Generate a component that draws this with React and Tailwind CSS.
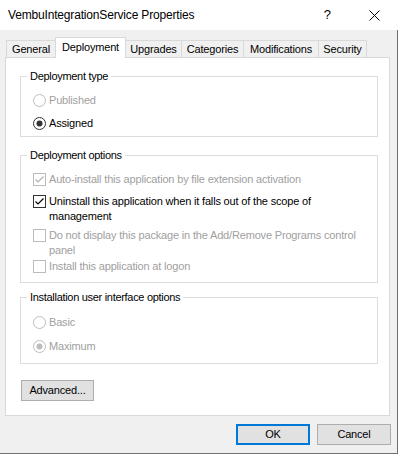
import React from "react";

function Check({ checked, disabled }) {
  const c = disabled ? "#bcbcbc" : "#333333";
  return (
    <svg width="13" height="13" viewBox="0 0 13 13" className="shrink-0 block">
      <rect x="0.5" y="0.5" width="12" height="12" fill="white" stroke={c} />
      {checked && (
        <polyline
          points="2.5,6.5 5,9 10.5,3.5"
          fill="none"
          stroke={disabled ? "#b0b0b0" : "#000000"}
          strokeWidth="1.2"
        />
      )}
    </svg>
  );
}

function Radio({ checked, disabled }) {
  const c = disabled ? "#bcbcbc" : "#333333";
  return (
    <svg width="13" height="13" viewBox="0 0 13 13" className="shrink-0 block">
      <circle cx="6.5" cy="6.5" r="6" fill="white" stroke={c} />
      {checked && <circle cx="6.5" cy="6.5" r="3" fill={disabled ? "#bcbcbc" : "#333333"} />}
    </svg>
  );
}

function Row({ children, control, disabled, className = "" }) {
  return (
    <div className={`flex items-start pl-[12px] ${className}`}>
      <div className="mt-[1px]">{control}</div>
      <div
        className={`ml-[3px] leading-[15px] whitespace-nowrap ${
          disabled ? "text-[#a0a0a0]" : "text-black"
        }`}
      >
        {children}
      </div>
    </div>
  );
}

function Group({ title, children, className = "" }) {
  return (
    <div className={`w-[358px] border border-[#dcdcdc] ${className}`}>
      <div className="-mt-[7px] ml-[6px] w-fit bg-white px-[3px] leading-[13px] tracking-[-0.3px] text-black">
        {title}
      </div>
      {children}
    </div>
  );
}

function Tab({ label, width, active, last }) {
  if (active) {
    return (
      <div
        className="relative z-10 -mb-px -mr-px flex h-[21px] items-center justify-center border-x border-t border-[#d9d9d9] bg-white pb-[1px] text-black"
        style={{ width }}
      >
        {label}
      </div>
    );
  }
  return (
    <div
      className={`flex h-[17px] items-center justify-center border-l border-t border-[#d9d9d9] bg-[#f0f0f0] pt-[1px] text-black ${
        last ? "border-r" : ""
      }`}
      style={{ width }}
    >
      {label}
    </div>
  );
}

export default function App() {
  return (
    <div className="h-[458px] w-[399px] overflow-hidden bg-white font-['Liberation_Sans',Arial,sans-serif] text-[11px]">
      {/* Title bar */}
      <div className="flex h-[30px] items-center bg-white">
        <div className="ml-[8px] text-[12px] tracking-[-0.17px] text-black">VembuIntegrationService Properties</div>
        <div className="ml-auto mr-[38px] text-[13px] text-black">?</div>
        <svg width="11" height="11" viewBox="0 0 11 11" className="mr-[19px] block">
          <line x1="0.5" y1="0.5" x2="10.5" y2="10.5" stroke="#000" strokeWidth="1" />
          <line x1="10.5" y1="0.5" x2="0.5" y2="10.5" stroke="#000" strokeWidth="1" />
        </svg>
      </div>

      {/* Body */}
      <div className="h-[424px] w-[398px] border-b border-r border-[#6f6f6f] bg-[#f0f0f0] pl-[5px] pt-[7px] tracking-[-0.17px]">
        {/* Tabs */}
        <div className="ml-[1px] flex h-[20px] items-end">
          <Tab label="General" width={49} />
          <Tab label="Deployment" width={71} active />
          <Tab label="Upgrades" width={56} />
          <Tab label="Categories" width={62} />
          <Tab label="Modifications" width={75} />
          <Tab label="Security" width={49} last />
        </div>

        {/* Panel */}
        <div className="h-[359px] w-[385px] border border-[#d9d9d9] bg-white pl-[14px] pt-[18px]">
          <Group title="Deployment type" className="pb-[5px]">
            <Row control={<Radio disabled />} disabled className="mt-[10px]">
              Published
            </Row>
            <Row control={<Radio checked />} className="mt-[8px]">
              Assigned
            </Row>
          </Group>

          <Group title="Deployment options" className="mt-[18px] pb-[8px]">
            <Row control={<Check checked disabled />} disabled className="mt-[10px]">
              Auto-install this application by file extension activation
            </Row>
            <Row control={<Check checked />} className="mt-[7px]">
              Uninstall this application when it falls out of the scope of
              <br />
              management
            </Row>
            <Row control={<Check disabled />} disabled className="mt-[4px]">
              Do not display this package in the Add/Remove Programs control
              <br />
              panel
            </Row>
            <Row control={<Check disabled />} disabled className="mt-[1px]">
              Install this application at logon
            </Row>
          </Group>

          <Group title="Installation user interface options" className="mt-[14px] pb-[9px]">
            <Row control={<Radio disabled />} disabled className="mt-[11px]">
              Basic
            </Row>
            <Row control={<Radio checked disabled />} disabled className="mt-[9px]">
              Maximum
            </Row>
          </Group>

          <button className="ml-[1px] mt-[16px] flex h-[21px] w-[73px] items-center justify-center border border-[#adadad] bg-[#e1e1e1] tracking-[-0.17px] text-black">
            Advanced...
          </button>
        </div>

        {/* Buttons */}
        <div className="mt-[8px] flex h-[21px] pl-[231px]">
          <button className="flex h-[21px] w-[74px] items-center justify-center border-2 border-[#0078d7] bg-[#e1e1e1] tracking-[-0.17px] text-black">
            OK
          </button>
          <button className="ml-[7px] flex h-[21px] w-[74px] items-center justify-center border border-[#adadad] bg-[#e1e1e1] tracking-[-0.17px] text-black">
            Cancel
          </button>
        </div>
      </div>
    </div>
  );
}
